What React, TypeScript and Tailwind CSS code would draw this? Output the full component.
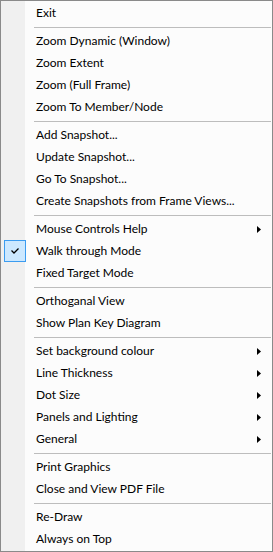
type Item = { label: string; sub?: boolean; checked?: boolean };

const groups: Item[][] = [
  [{ label: "Exit" }],
  [
    { label: "Zoom Dynamic (Window)" },
    { label: "Zoom Extent" },
    { label: "Zoom (Full Frame)" },
    { label: "Zoom To Member/Node" },
  ],
  [
    { label: "Add Snapshot..." },
    { label: "Update Snapshot..." },
    { label: "Go To Snapshot..." },
    { label: "Create Snapshots from Frame Views..." },
  ],
  [
    { label: "Mouse Controls Help", sub: true },
    { label: "Walk through Mode", checked: true },
    { label: "Fixed Target Mode" },
  ],
  [{ label: "Orthoganal View" }, { label: "Show Plan Key Diagram" }],
  [
    { label: "Set background colour", sub: true },
    { label: "Line Thickness", sub: true },
    { label: "Dot Size", sub: true },
    { label: "Panels and Lighting", sub: true },
    { label: "General", sub: true },
  ],
  [{ label: "Print Graphics" }, { label: "Close and View PDF File" }],
  [{ label: "Re-Draw" }, { label: "Always on Top" }],
];

function MenuRow({ item }: { item: Item }) {
  return (
    <div className="flex h-[22px] items-center">
      <div className="flex h-full w-[24px] shrink-0 items-center justify-end">
        {item.checked && (
          <div className="flex h-[22px] w-[22px] items-center justify-center border border-[#3c9cf0] bg-[#cce8ff]">
            <svg width="8" height="6" viewBox="0 0 8 6">
              <path d="M0.5 2.5 L3 5 L7.5 0.5" fill="none" stroke="#000" strokeWidth="1.3" />
            </svg>
          </div>
        )}
      </div>
      <span className="ml-[10px] flex-1 whitespace-nowrap text-[12px] leading-none text-black">
        {item.label}
      </span>
      {item.sub && (
        <svg width="4" height="7" viewBox="0 0 4 7" className="mr-[11px]">
          <path d="M0 0 L4 3.5 L0 7 Z" fill="#000" />
        </svg>
      )}
    </div>
  );
}

export default function App() {
  return (
    <div
      className="relative h-[552px] w-[273px] border border-[#8a8a8a] bg-[#fcfcfc] py-px"
      style={{ fontFamily: 'Lato, "Noto Sans", sans-serif' }}
    >
      <div className="absolute bottom-0 left-0 top-0 w-[24px] bg-[#f0f0f0]" />
      <div className="relative pl-px">
        {groups.map((g, gi) => (
          <div key={gi}>
            {gi > 0 && (
              <div className="flex h-[6px] items-center pl-[32px] pr-[1px]">
                <div className="h-px w-full bg-[#bdbdbd]" />
              </div>
            )}
            {g.map((it) => (
              <MenuRow key={it.label} item={it} />
            ))}
          </div>
        ))}
      </div>
    </div>
  );
}
